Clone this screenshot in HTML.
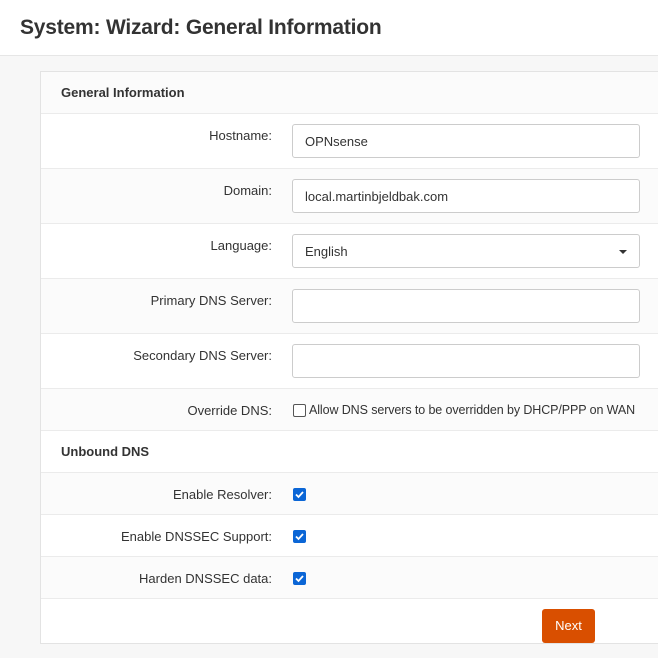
<!DOCTYPE html>
<html><head><style>
*{box-sizing:border-box;margin:0;padding:0}
body{width:658px;height:658px;background:#f7f7f7;font-family:"Liberation Sans",sans-serif;color:#333;font-size:13px;position:relative;overflow:hidden}
.hdr{position:absolute;left:0;top:0;width:658px;height:56px;background:#fff;border-bottom:1px solid #e6e6e6}
.hdr h1{position:absolute;left:20px;top:16px;font-size:21px;font-weight:bold;color:#333;letter-spacing:-0.2px}
.panel{position:absolute;left:40px;top:71px;width:618px;height:573px;background:#fff;border:1px solid #e3e3e3;border-right:none}
.row{position:absolute;left:0;width:618px;border-bottom:1px solid #ebebeb}
.g{background:#fbfbfb}
.sec{font-weight:bold;font-size:13px;padding-left:20px}
.lab{position:absolute;right:387px;font-size:13px;color:#333}
.inp{position:absolute;left:251px;width:348px;height:34px;border:1px solid #ccc;border-radius:3px;background:#fff;padding:9px 12px;font-size:13px}
.cb{position:absolute;left:252px;width:13px;height:13px;border-radius:2px;background:#0b66d6}
.cb svg{position:absolute;left:1px;top:1px}
</style></head><body>
<div class="hdr"><h1>System: Wizard: General Information</h1></div>
<div class="panel">
<div class="row g sec" style="top:0;height:42px;line-height:42px">General Information</div>
<div class="row" style="top:42px;height:55px"><span class="lab" style="top:14px">Hostname:</span><div class="inp" style="top:10px">OPNsense</div></div>
<div class="row g" style="top:97px;height:55px"><span class="lab" style="top:14px">Domain:</span><div class="inp" style="top:10px">local.martinbjeldbak.com</div></div>
<div class="row" style="top:152px;height:55px"><span class="lab" style="top:14px">Language:</span><div class="inp" style="top:10px">English<span style="position:absolute;right:12px;top:15px;width:0;height:0;border-left:4px solid transparent;border-right:4px solid transparent;border-top:4px solid #333"></span></div></div>
<div class="row g" style="top:207px;height:55px"><span class="lab" style="top:14px">Primary DNS Server:</span><div class="inp" style="top:10px"></div></div>
<div class="row" style="top:262px;height:55px"><span class="lab" style="top:14px">Secondary DNS Server:</span><div class="inp" style="top:10px"></div></div>
<div class="row g" style="top:317px;height:42px"><span class="lab" style="top:14px">Override DNS:</span><span style="position:absolute;left:252px;top:15px;width:13px;height:13px;border:1px solid #555;border-radius:2px;background:#fff"></span><span style="position:absolute;left:268px;top:14px;font-size:12.5px;letter-spacing:-0.1px;white-space:nowrap">Allow DNS servers to be overridden by DHCP/PPP on WAN</span></div>
<div class="row sec" style="top:359px;height:42px;line-height:42px">Unbound DNS</div>
<div class="row g" style="top:401px;height:42px"><span class="lab" style="top:14px">Enable Resolver:</span><span class="cb" style="top:15px"><svg width="11" height="11" viewBox="0 0 11 11"><path d="M2 5.5L4.5 8L9 3" stroke="#fff" stroke-width="1.8" fill="none"/></svg></span></div>
<div class="row" style="top:443px;height:42px"><span class="lab" style="top:14px">Enable DNSSEC Support:</span><span class="cb" style="top:15px"><svg width="11" height="11" viewBox="0 0 11 11"><path d="M2 5.5L4.5 8L9 3" stroke="#fff" stroke-width="1.8" fill="none"/></svg></span></div>
<div class="row g" style="top:485px;height:42px"><span class="lab" style="top:14px">Harden DNSSEC data:</span><span class="cb" style="top:15px"><svg width="11" height="11" viewBox="0 0 11 11"><path d="M2 5.5L4.5 8L9 3" stroke="#fff" stroke-width="1.8" fill="none"/></svg></span></div>
<div style="position:absolute;left:501px;top:537px;width:53px;height:34px;background:#d94f00;border-radius:3px;color:#fff;font-size:13px;text-align:center;line-height:34px">Next</div>
</div>
</body></html>
